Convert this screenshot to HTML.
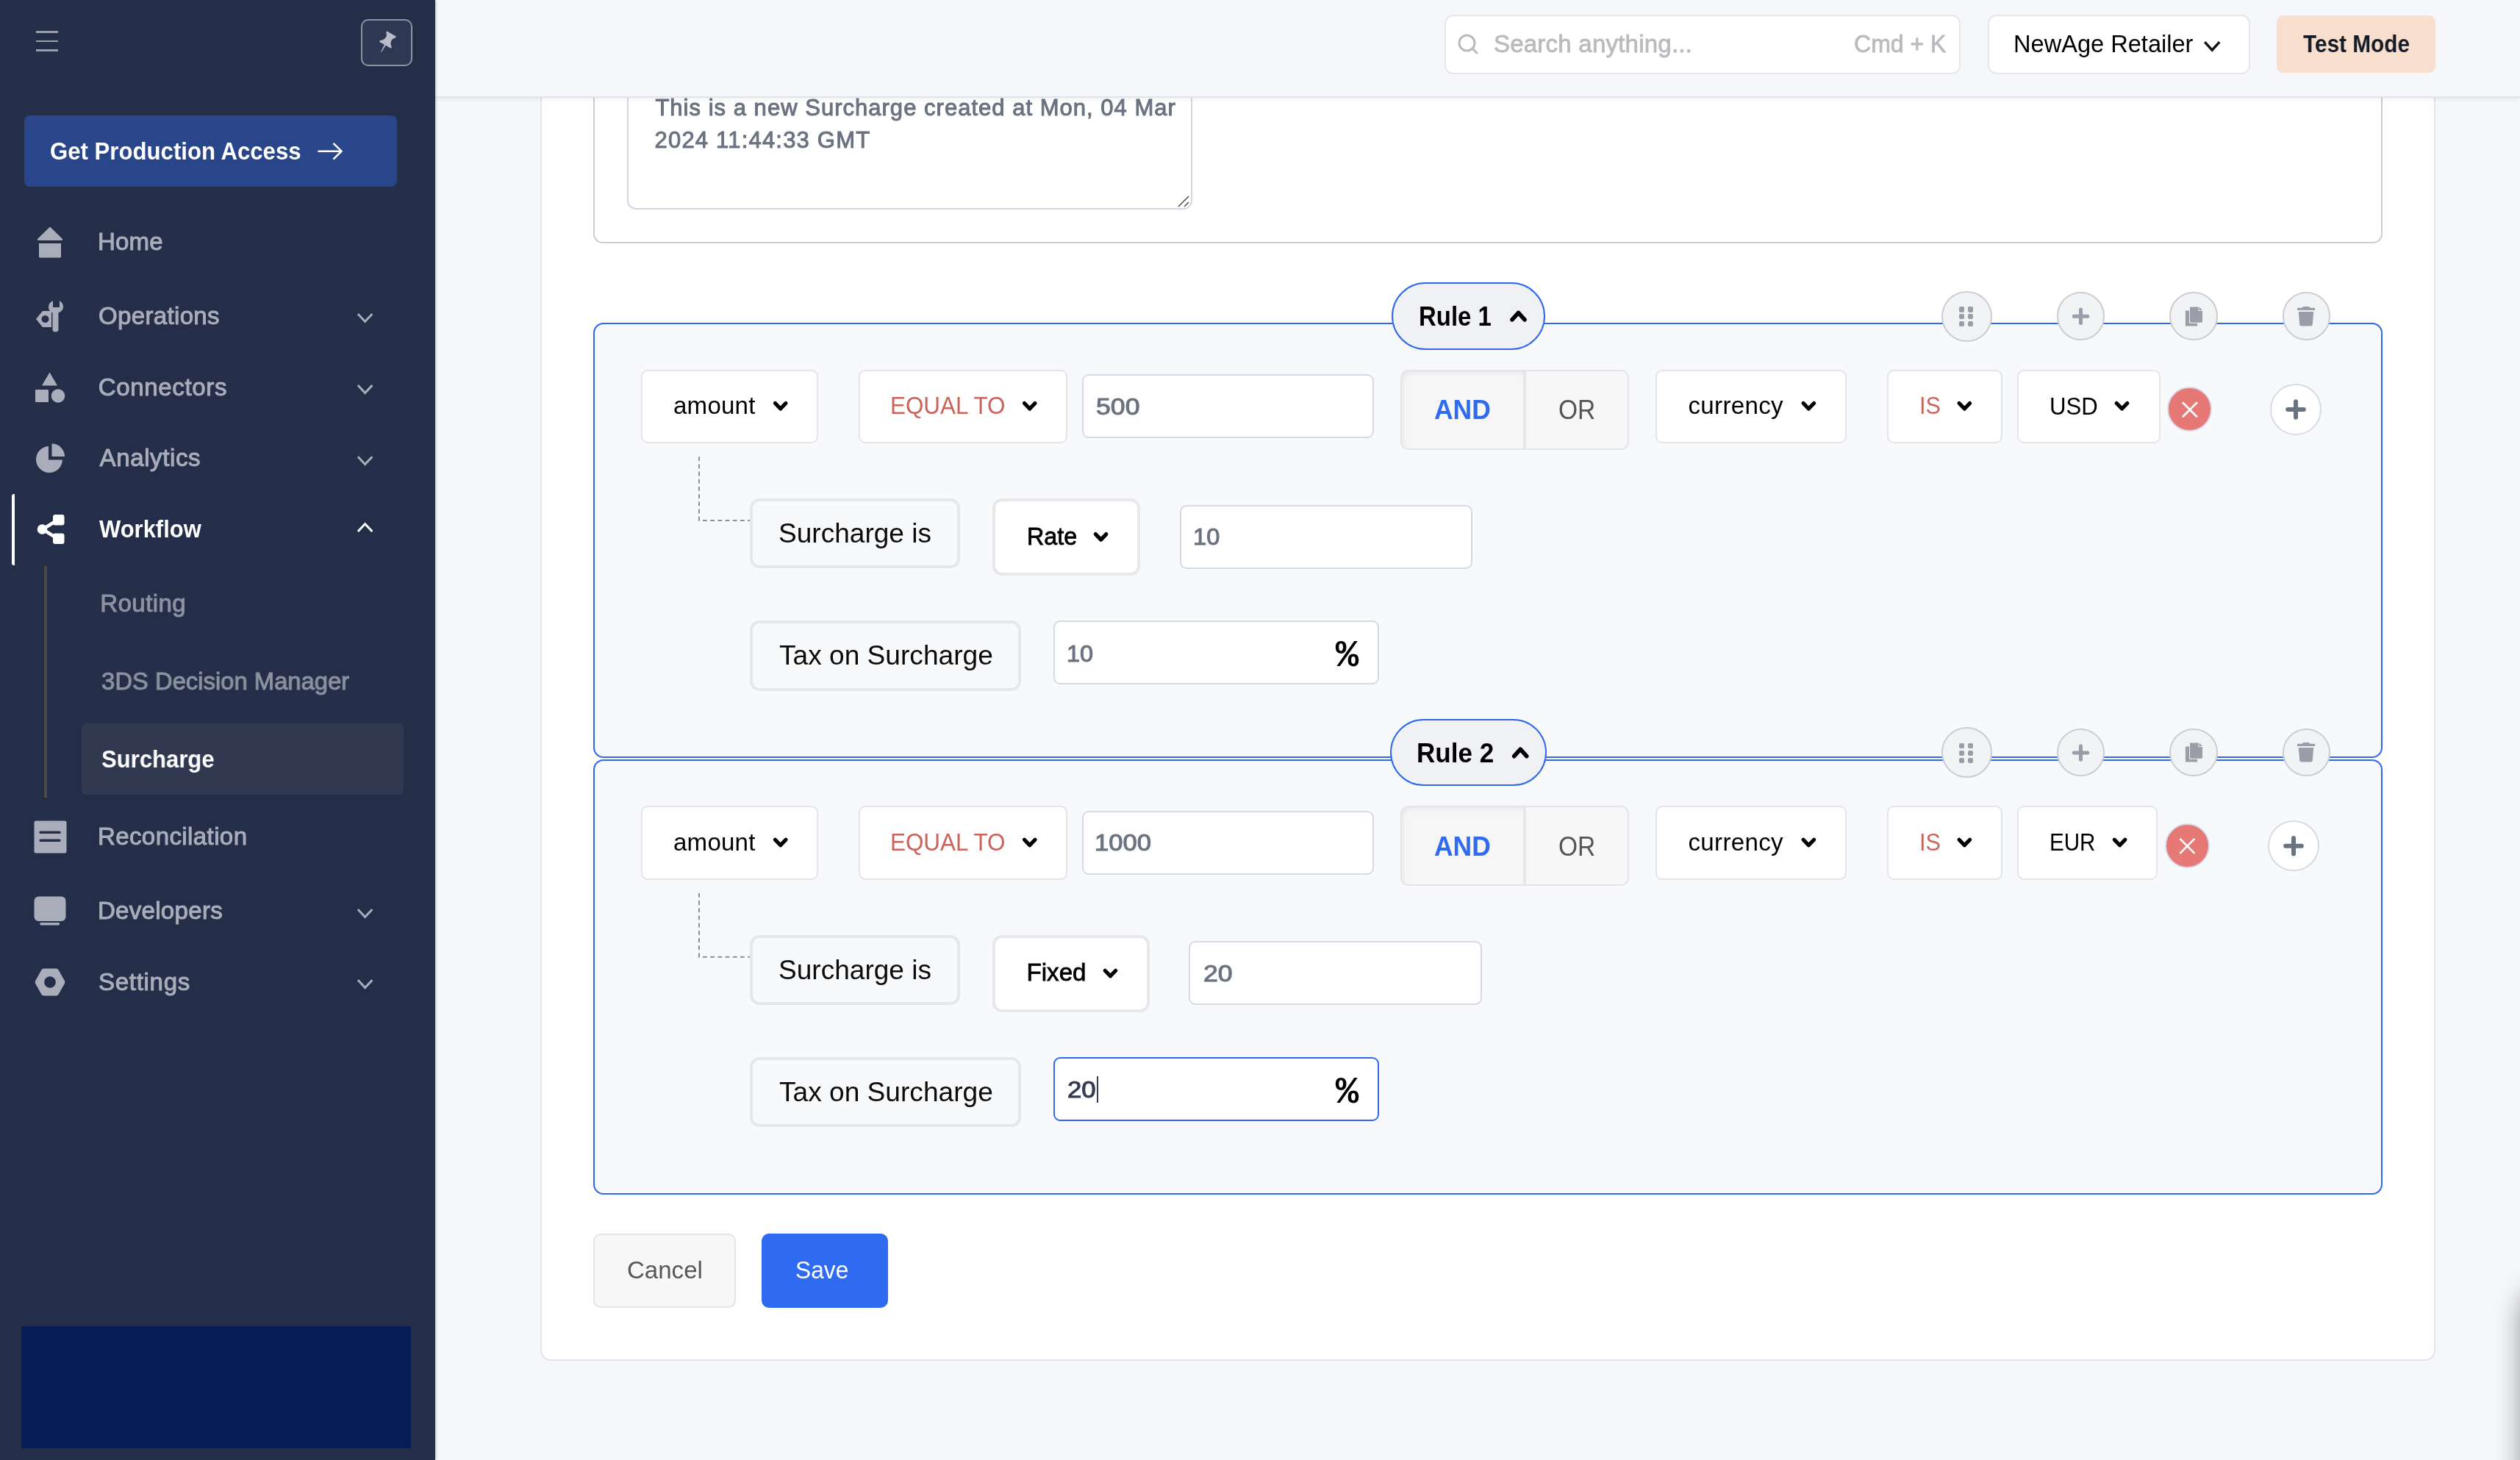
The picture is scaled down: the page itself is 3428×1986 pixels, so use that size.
<!DOCTYPE html>
<html lang="en"><head><meta charset="utf-8"><title>Surcharge</title>
<style>
html,body{margin:0;padding:0}
body{width:3428px;height:1986px;position:relative;overflow:hidden;background:#f6f7fb;font-family:"Liberation Sans",sans-serif}
#root{position:absolute;left:0;top:0;width:3428px;height:1986px;overflow:hidden;will-change:transform}
.t{position:absolute;white-space:nowrap;display:block;line-height:40px;transform-origin:0 0}
.b{position:absolute;box-sizing:border-box}
svg{position:absolute;overflow:visible;left:0;top:0}
</style></head><body><div id="root">
<div class="b" style="left:735.0px;top:60.0px;width:2577.7px;height:1790.5px;background:#fff;border:2px solid #e3e4ea;border-radius:14px"></div><div class="b" style="left:807.0px;top:40.0px;width:2434.0px;height:290.7px;background:#fff;border:2px solid #cbcdd4;border-radius:13px"></div><div class="b" style="left:853.0px;top:60.0px;width:768.5px;height:225.0px;background:#fff;border:2px solid #d4d6e2;border-radius:12px"></div><span class="t" style="left:891.4px;top:127.1px;font-size:31.0px;color:#6b7280;letter-spacing:1.02px;-webkit-text-stroke:1.00px #6b7280;">This is a new Surcharge created at Mon, 04 Mar</span><span class="t" style="left:890.5px;top:171.2px;font-size:31.0px;color:#6b7280;letter-spacing:1.20px;-webkit-text-stroke:1.00px #6b7280;">2024 11:44:33 GMT</span><svg width="1" height="1"><path d="M1603 281 L1617 267 M1611 281 L1617 275" stroke="#555" stroke-width="1.6" fill="none"/></svg><div class="b" style="left:807.0px;top:438.8px;width:2434.0px;height:592.2px;background:#f8f9fb;border:2.2px solid #2f68ee;border-radius:14px"></div><div class="b" style="left:1893.3px;top:384.0px;width:208.4px;height:91.6px;background:#f0f1f4;border:2.2px solid #2f68ee;border-radius:46px"></div><span class="t" style="left:1929.5px;top:410.3px;font-size:37.3px;font-weight:700;color:#000;transform:scaleX(0.8826);">Rule 1</span><svg width="1" height="1"><path d="M2057.0 434.9 L2065.5 425.4 L2074.0 434.9" stroke="#000" stroke-width="5.6" fill="none" stroke-linecap="round" stroke-linejoin="round"/></svg><div class="b" style="left:2640.7px;top:395.5px;width:69.0px;height:69.0px;background:#f2f3f5;border:2px solid #cbcdd2;border-radius:50%"></div><div class="b" style="left:2664.8px;top:417.0px;width:7.4px;height:7.6px;background:#9a9ea8;border-radius:2px"></div><div class="b" style="left:2677.0px;top:417.0px;width:7.4px;height:7.6px;background:#9a9ea8;border-radius:2px"></div><div class="b" style="left:2664.8px;top:426.9px;width:7.4px;height:7.6px;background:#9a9ea8;border-radius:2px"></div><div class="b" style="left:2677.0px;top:426.9px;width:7.4px;height:7.6px;background:#9a9ea8;border-radius:2px"></div><div class="b" style="left:2664.8px;top:436.8px;width:7.4px;height:7.6px;background:#9a9ea8;border-radius:2px"></div><div class="b" style="left:2677.0px;top:436.8px;width:7.4px;height:7.6px;background:#9a9ea8;border-radius:2px"></div><div class="b" style="left:2797.9px;top:397.1px;width:65.5px;height:65.5px;background:#f2f3f5;border:2px solid #cbcdd2;border-radius:50%"></div><svg width="1" height="1"><path d="M2821.2 430.3 H2839.8 M2830.5 421.1 V439.6" stroke="#9a9ea8" stroke-width="5" stroke-linecap="round" fill="none"/></svg><div class="b" style="left:2951.2px;top:397.1px;width:65.5px;height:65.5px;background:#f2f3f5;border:2px solid #cbcdd2;border-radius:50%"></div><svg style="left:2972px;top:416.5px" width="25" height="27" viewBox="0 0 25 27"><path d="M7 0.5 H18.5 V6 H24 V20.3 Q24 21.8 22.5 21.8 H8.5 Q7 21.8 7 20.3 Z M19.5 0.5 L24 5 H19.5 Z M0.9 5.6 H6 V21.3 Q6 22.8 7.5 22.8 H17 V26.4 H0.9 Z" fill="#9a9ea8"/></svg><div class="b" style="left:3104.6px;top:397.1px;width:65.5px;height:65.5px;background:#f2f3f5;border:2px solid #cbcdd2;border-radius:50%"></div><svg style="left:3125px;top:416.5px" width="24" height="27" viewBox="0 0 24 27"><path d="M8 0 H16 L17.5 1.8 H24 V5 H0 V1.8 H6.5 Z M1.8 7 H22.2 L20.8 24.5 Q20.6 26.5 18.6 26.5 H5.4 Q3.4 26.5 3.2 24.5 Z" fill="#9a9ea8"/></svg><div class="b" style="left:871.6px;top:502.6px;width:241.8px;height:100.4px;background:#fff;border:2px solid #e3e4ec;border-radius:9px"></div><span class="t" style="left:916.0px;top:532.3px;font-size:33.1px;color:#000;letter-spacing:0.22px;">amount</span><svg width="1" height="1"><path d="M1054.5 548.5 L1061.7 556.0 L1069.0 548.5" stroke="#000" stroke-width="5.2" fill="none" stroke-linecap="round" stroke-linejoin="round"/></svg><div class="b" style="left:1167.5px;top:502.6px;width:284.5px;height:100.4px;background:#fff;border:2px solid #e3e4ec;border-radius:9px"></div><span class="t" style="left:1211.0px;top:532.3px;font-size:33.1px;color:#c9655c;transform:scaleX(0.9490);">EQUAL TO</span><svg width="1" height="1"><path d="M1393.5 548.5 L1400.7 556.0 L1408.0 548.5" stroke="#000" stroke-width="5.2" fill="none" stroke-linecap="round" stroke-linejoin="round"/></svg><div class="b" style="left:1471.7px;top:509.3px;width:397.8px;height:87.2px;background:#fff;border:2px solid #d7d9e6;border-radius:9px"></div><span class="t" style="left:1490.9px;top:533.6px;font-size:31.0px;color:#6b7280;transform:scaleX(1.1493);-webkit-text-stroke:1.00px #6b7280;">500</span><div class="b" style="left:1905.4px;top:502.6px;width:310.2px;height:109.1px;background:#f7f7f8;border:2px solid #e3e4e9;border-radius:11px"></div><div class="b" style="left:1907.4px;top:504.6px;width:164.6px;height:105.1px;background:#f6f6f7;box-shadow:inset 3px 4px 7px -2px rgba(0,0,0,0.07);border-radius:9px 0 0 9px"></div><div class="b" style="left:2072.0px;top:504.6px;width:4.0px;height:105.1px;background:#e6e7eb"></div><span class="t" style="left:1951.1px;top:537.1px;font-size:37.3px;font-weight:700;color:#2f6bee;transform:scaleX(0.9511);">AND</span><span class="t" style="left:2119.8px;top:537.1px;font-size:37.3px;color:#555659;transform:scaleX(0.8994);">OR</span><div class="b" style="left:2251.8px;top:502.6px;width:260.6px;height:100.4px;background:#fff;border:2px solid #e3e4ec;border-radius:9px"></div><span class="t" style="left:2296.5px;top:532.3px;font-size:33.1px;color:#000;letter-spacing:0.33px;">currency</span><svg width="1" height="1"><path d="M2453.1 548.5 L2460.3 556.0 L2467.6 548.5" stroke="#000" stroke-width="5.2" fill="none" stroke-linecap="round" stroke-linejoin="round"/></svg><div class="b" style="left:2566.7px;top:502.6px;width:157.3px;height:100.4px;background:#fff;border:2px solid #e3e4ec;border-radius:9px"></div><span class="t" style="left:2610.7px;top:532.3px;font-size:33.1px;color:#c9655c;transform:scaleX(0.9250);">IS</span><svg width="1" height="1"><path d="M2665.1 548.5 L2672.3 556.0 L2679.6 548.5" stroke="#000" stroke-width="5.2" fill="none" stroke-linecap="round" stroke-linejoin="round"/></svg><div class="b" style="left:2743.5px;top:502.6px;width:195.1px;height:100.4px;background:#fff;border:2px solid #e3e4ec;border-radius:9px"></div><span class="t" style="left:2787.7px;top:532.6px;font-size:33.1px;color:#000;transform:scaleX(0.9413);">USD</span><svg width="1" height="1"><path d="M2879.2 548.5 L2886.5 556.0 L2893.8 548.5" stroke="#000" stroke-width="5.2" fill="none" stroke-linecap="round" stroke-linejoin="round"/></svg><div class="b" style="left:2948.2px;top:526.4px;width:61.0px;height:61.0px;background:#e67875;border:2px solid #d9dcea;border-radius:50%"></div><svg width="1" height="1"><path d="M2968.9 547.2 l20 20 m0 -20 l-20 20" stroke="#fff" stroke-width="2.7" fill="none"/></svg><div class="b" style="left:3088.2px;top:522.1px;width:69.5px;height:69.5px;background:#fff;border:2px solid #d7dae7;border-radius:50%"></div><svg width="1" height="1"><path d="M3112.2 557.0 H3133.8 M3123.0 546.2 V567.8" stroke="#6b7280" stroke-width="6" stroke-linecap="round" fill="none"/></svg><svg width="1" height="1"><path d="M951 621.2 V708.0 H1020.5" stroke="#8b8f9a" stroke-width="2" stroke-dasharray="5.8 4.4" fill="none"/></svg><div class="b" style="left:1020.3px;top:678.3px;width:285.4px;height:95.2px;background:#f8f9fb;border:4px solid #e6e7ea;border-radius:13px"></div><span class="t" style="left:1059.0px;top:705.4px;font-size:37.3px;color:#0b0b0c;transform:scaleX(0.9934);">Surcharge is</span><div class="b" style="left:1350.1px;top:678.3px;width:201.3px;height:104.5px;background:#fff;border:4px solid #e7e8eb;border-radius:13px"></div><span class="t" style="left:1396.5px;top:709.7px;font-size:33.1px;color:#000;transform:scaleX(0.9759);-webkit-text-stroke:0.80px #000;">Rate</span><svg width="1" height="1"><path d="M1490.3 726.6 L1497.6 734.1 L1504.8 726.6" stroke="#000" stroke-width="5.2" fill="none" stroke-linecap="round" stroke-linejoin="round"/></svg><div class="b" style="left:1605.2px;top:686.5px;width:398.3px;height:87.2px;background:#fff;border:2px solid #d7d9e6;border-radius:9px"></div><span class="t" style="left:1622.8px;top:711.0px;font-size:31.0px;color:#6b7280;transform:scaleX(1.0531);-webkit-text-stroke:1.00px #6b7280;">10</span><div class="b" style="left:1020.3px;top:844.0px;width:368.3px;height:95.6px;background:#f8f9fb;border:4px solid #e6e7ea;border-radius:13px"></div><span class="t" style="left:1060.0px;top:871.4px;font-size:37.3px;color:#0b0b0c;transform:scaleX(0.9948);">Tax on Surcharge</span><div class="b" style="left:1433.2px;top:844.0px;width:442.5px;height:87.3px;background:#fff;border:2px solid #d7d9e6;border-radius:9px"></div><span class="t" style="left:1451.1px;top:869.6px;font-size:31.0px;color:#6b7280;transform:scaleX(1.0469);-webkit-text-stroke:1.00px #6b7280;">10</span><span class="t" style="left:1816.8px;top:862.0px;font-family:'Liberation Mono',monospace;font-size:52.5px;line-height:60px;font-weight:700;color:#000">%</span><div class="b" style="left:807.0px;top:1032.5px;width:2434.0px;height:592.2px;background:#f8f9fb;border:2.2px solid #2f68ee;border-radius:14px"></div><div class="b" style="left:1890.5px;top:977.7px;width:213.9px;height:91.6px;background:#f0f1f4;border:2.2px solid #2f68ee;border-radius:46px"></div><span class="t" style="left:1926.7px;top:1004.0px;font-size:37.3px;font-weight:700;color:#000;transform:scaleX(0.9409);">Rule 2</span><svg width="1" height="1"><path d="M2059.7 1028.7 L2068.2 1019.2 L2076.7 1028.7" stroke="#000" stroke-width="5.6" fill="none" stroke-linecap="round" stroke-linejoin="round"/></svg><div class="b" style="left:2640.7px;top:989.2px;width:69.0px;height:69.0px;background:#f2f3f5;border:2px solid #cbcdd2;border-radius:50%"></div><div class="b" style="left:2664.8px;top:1010.7px;width:7.4px;height:7.6px;background:#9a9ea8;border-radius:2px"></div><div class="b" style="left:2677.0px;top:1010.7px;width:7.4px;height:7.6px;background:#9a9ea8;border-radius:2px"></div><div class="b" style="left:2664.8px;top:1020.6px;width:7.4px;height:7.6px;background:#9a9ea8;border-radius:2px"></div><div class="b" style="left:2677.0px;top:1020.6px;width:7.4px;height:7.6px;background:#9a9ea8;border-radius:2px"></div><div class="b" style="left:2664.8px;top:1030.5px;width:7.4px;height:7.6px;background:#9a9ea8;border-radius:2px"></div><div class="b" style="left:2677.0px;top:1030.5px;width:7.4px;height:7.6px;background:#9a9ea8;border-radius:2px"></div><div class="b" style="left:2797.9px;top:990.9px;width:65.5px;height:65.5px;background:#f2f3f5;border:2px solid #cbcdd2;border-radius:50%"></div><svg width="1" height="1"><path d="M2821.2 1024.0 H2839.8 M2830.5 1014.8 V1033.2" stroke="#9a9ea8" stroke-width="5" stroke-linecap="round" fill="none"/></svg><div class="b" style="left:2951.2px;top:990.9px;width:65.5px;height:65.5px;background:#f2f3f5;border:2px solid #cbcdd2;border-radius:50%"></div><svg style="left:2972px;top:1010.2px" width="25" height="27" viewBox="0 0 25 27"><path d="M7 0.5 H18.5 V6 H24 V20.3 Q24 21.8 22.5 21.8 H8.5 Q7 21.8 7 20.3 Z M19.5 0.5 L24 5 H19.5 Z M0.9 5.6 H6 V21.3 Q6 22.8 7.5 22.8 H17 V26.4 H0.9 Z" fill="#9a9ea8"/></svg><div class="b" style="left:3104.6px;top:990.9px;width:65.5px;height:65.5px;background:#f2f3f5;border:2px solid #cbcdd2;border-radius:50%"></div><svg style="left:3125px;top:1010.2px" width="24" height="27" viewBox="0 0 24 27"><path d="M8 0 H16 L17.5 1.8 H24 V5 H0 V1.8 H6.5 Z M1.8 7 H22.2 L20.8 24.5 Q20.6 26.5 18.6 26.5 H5.4 Q3.4 26.5 3.2 24.5 Z" fill="#9a9ea8"/></svg><div class="b" style="left:871.6px;top:1096.3px;width:241.8px;height:100.4px;background:#fff;border:2px solid #e3e4ec;border-radius:9px"></div><span class="t" style="left:916.0px;top:1126.0px;font-size:33.1px;color:#000;letter-spacing:0.22px;">amount</span><svg width="1" height="1"><path d="M1054.5 1142.2 L1061.7 1149.8 L1069.0 1142.2" stroke="#000" stroke-width="5.2" fill="none" stroke-linecap="round" stroke-linejoin="round"/></svg><div class="b" style="left:1167.5px;top:1096.3px;width:284.5px;height:100.4px;background:#fff;border:2px solid #e3e4ec;border-radius:9px"></div><span class="t" style="left:1211.0px;top:1126.0px;font-size:33.1px;color:#c9655c;transform:scaleX(0.9490);">EQUAL TO</span><svg width="1" height="1"><path d="M1393.5 1142.2 L1400.7 1149.8 L1408.0 1142.2" stroke="#000" stroke-width="5.2" fill="none" stroke-linecap="round" stroke-linejoin="round"/></svg><div class="b" style="left:1471.7px;top:1103.0px;width:397.8px;height:87.2px;background:#fff;border:2px solid #d7d9e6;border-radius:9px"></div><span class="t" style="left:1489.0px;top:1127.3px;font-size:31.0px;color:#6b7280;transform:scaleX(1.1162);-webkit-text-stroke:1.00px #6b7280;">1000</span><div class="b" style="left:1905.4px;top:1096.3px;width:310.2px;height:109.1px;background:#f7f7f8;border:2px solid #e3e4e9;border-radius:11px"></div><div class="b" style="left:1907.4px;top:1098.3px;width:164.6px;height:105.1px;background:#f6f6f7;box-shadow:inset 3px 4px 7px -2px rgba(0,0,0,0.07);border-radius:9px 0 0 9px"></div><div class="b" style="left:2072.0px;top:1098.3px;width:4.0px;height:105.1px;background:#e6e7eb"></div><span class="t" style="left:1951.1px;top:1130.8px;font-size:37.3px;font-weight:700;color:#2f6bee;transform:scaleX(0.9511);">AND</span><span class="t" style="left:2119.8px;top:1130.8px;font-size:37.3px;color:#555659;transform:scaleX(0.8994);">OR</span><div class="b" style="left:2251.8px;top:1096.3px;width:260.6px;height:100.4px;background:#fff;border:2px solid #e3e4ec;border-radius:9px"></div><span class="t" style="left:2296.5px;top:1126.0px;font-size:33.1px;color:#000;letter-spacing:0.33px;">currency</span><svg width="1" height="1"><path d="M2453.1 1142.2 L2460.3 1149.8 L2467.6 1142.2" stroke="#000" stroke-width="5.2" fill="none" stroke-linecap="round" stroke-linejoin="round"/></svg><div class="b" style="left:2566.7px;top:1096.3px;width:157.3px;height:100.4px;background:#fff;border:2px solid #e3e4ec;border-radius:9px"></div><span class="t" style="left:2610.7px;top:1126.0px;font-size:33.1px;color:#c9655c;transform:scaleX(0.9250);">IS</span><svg width="1" height="1"><path d="M2665.1 1142.2 L2672.3 1149.8 L2679.6 1142.2" stroke="#000" stroke-width="5.2" fill="none" stroke-linecap="round" stroke-linejoin="round"/></svg><div class="b" style="left:2743.5px;top:1096.3px;width:191.7px;height:100.4px;background:#fff;border:2px solid #e3e4ec;border-radius:9px"></div><span class="t" style="left:2787.8px;top:1126.3px;font-size:33.1px;color:#000;transform:scaleX(0.8949);">EUR</span><svg width="1" height="1"><path d="M2876.3 1142.2 L2883.6 1149.8 L2890.8 1142.2" stroke="#000" stroke-width="5.2" fill="none" stroke-linecap="round" stroke-linejoin="round"/></svg><div class="b" style="left:2944.7px;top:1120.1px;width:61.0px;height:61.0px;background:#e67875;border:2px solid #d9dcea;border-radius:50%"></div><svg width="1" height="1"><path d="M2965.4 1140.9 l20 20 m0 -20 l-20 20" stroke="#fff" stroke-width="2.7" fill="none"/></svg><div class="b" style="left:3085.2px;top:1115.8px;width:69.5px;height:69.5px;background:#fff;border:2px solid #d7dae7;border-radius:50%"></div><svg width="1" height="1"><path d="M3109.2 1150.7 H3130.8 M3120.0 1140.0 V1161.5" stroke="#6b7280" stroke-width="6" stroke-linecap="round" fill="none"/></svg><svg width="1" height="1"><path d="M951 1214.9 V1301.7 H1020.5" stroke="#8b8f9a" stroke-width="2" stroke-dasharray="5.8 4.4" fill="none"/></svg><div class="b" style="left:1020.3px;top:1272.0px;width:285.4px;height:95.2px;background:#f8f9fb;border:4px solid #e6e7ea;border-radius:13px"></div><span class="t" style="left:1059.0px;top:1299.1px;font-size:37.3px;color:#0b0b0c;transform:scaleX(0.9934);">Surcharge is</span><div class="b" style="left:1350.1px;top:1272.0px;width:213.6px;height:104.5px;background:#fff;border:4px solid #e7e8eb;border-radius:13px"></div><span class="t" style="left:1396.5px;top:1303.4px;font-size:33.1px;color:#000;letter-spacing:0.02px;-webkit-text-stroke:0.80px #000;">Fixed</span><svg width="1" height="1"><path d="M1503.2 1320.3 L1510.4 1327.8 L1517.7 1320.3" stroke="#000" stroke-width="5.2" fill="none" stroke-linecap="round" stroke-linejoin="round"/></svg><div class="b" style="left:1617.1px;top:1280.2px;width:398.6px;height:87.2px;background:#fff;border:2px solid #d7d9e6;border-radius:9px"></div><span class="t" style="left:1636.8px;top:1304.7px;font-size:31.0px;color:#6b7280;transform:scaleX(1.1503);-webkit-text-stroke:1.00px #6b7280;">20</span><div class="b" style="left:1020.3px;top:1437.7px;width:368.3px;height:95.6px;background:#f8f9fb;border:4px solid #e6e7ea;border-radius:13px"></div><span class="t" style="left:1060.0px;top:1465.1px;font-size:37.3px;color:#0b0b0c;transform:scaleX(0.9948);">Tax on Surcharge</span><div class="b" style="left:1433.2px;top:1437.7px;width:442.5px;height:87.3px;background:#fff;border:2px solid #2f68ee;border-radius:9px"></div><span class="t" style="left:1452.4px;top:1463.3px;font-size:31.0px;color:#353c50;transform:scaleX(1.1228);-webkit-text-stroke:1.00px #353c50;">20</span><span class="t" style="left:1816.8px;top:1455.7px;font-family:'Liberation Mono',monospace;font-size:52.5px;line-height:60px;font-weight:700;color:#000">%</span><div class="b" style="left:1492.2px;top:1464.3px;width:1.8px;height:36.2px;background:#353c50"></div><div class="b" style="left:807.2px;top:1678.0px;width:193.6px;height:100.7px;background:#f7f7f7;border:2px solid #e4e5ea;border-radius:10px"></div><span class="t" style="left:852.9px;top:1707.9px;font-size:33.1px;color:#55575b;letter-spacing:0.01px;">Cancel</span><div class="b" style="left:1036.2px;top:1678.0px;width:171.6px;height:100.7px;background:#2f6bf0;border-radius:10px"></div><span class="t" style="left:1081.9px;top:1707.9px;font-size:33.1px;color:#fff;transform:scaleX(0.9588);">Save</span><div class="b" style="left:3440.0px;top:1760.0px;width:100.0px;height:440.0px;background:#000;box-shadow:0 0 36px 10px rgba(0,0,0,0.42);border-radius:30px"></div><div class="b" style="left:592.0px;top:0.0px;width:2836.0px;height:132.5px;background:#f6f7fb;border-bottom:2px solid #e2e4ea;box-shadow:0 3px 5px rgba(0,0,0,0.05)"></div><div class="b" style="left:1964.7px;top:19.6px;width:702.7px;height:81.4px;background:#fff;border:2px solid #e6e7ea;border-radius:12px"></div><svg style="left:1983px;top:46px" width="30" height="30" viewBox="0 0 30 30"><circle cx="12.5" cy="12.5" r="10.5" stroke="#b9bbbe" stroke-width="3" fill="none"/><path d="M20 20 L26 26" stroke="#b9bbbe" stroke-width="3" stroke-linecap="round"/></svg><span class="t" style="left:2031.9px;top:40.0px;font-size:33.1px;color:#b9bbbe;letter-spacing:0.20px;-webkit-text-stroke:0.80px #b9bbbe;">Search anything...</span><span class="t" style="left:2521.5px;top:40.0px;font-size:33.1px;color:#b9bbbe;transform:scaleX(0.9681);-webkit-text-stroke:0.80px #b9bbbe;">Cmd + K</span><div class="b" style="left:2703.7px;top:19.6px;width:357.1px;height:81.4px;background:#fff;border:2px solid #e6e7ea;border-radius:12px"></div><span class="t" style="left:2738.8px;top:39.7px;font-size:33.1px;color:#000;transform:scaleX(0.9849);">NewAge Retailer</span><svg width="1" height="1"><path d="M2999.2 57.1 L3009.2 68.1 L3019.2 57.1" stroke="#111" stroke-width="3.4" fill="none" stroke-linecap="butt" stroke-linejoin="miter"/></svg><div class="b" style="left:3097.0px;top:21.0px;width:215.8px;height:77.5px;background:#f8dfcd;border-radius:9px"></div><span class="t" style="left:3133.2px;top:39.7px;font-size:33.1px;font-weight:700;color:#151a27;transform:scaleX(0.8998);">Test Mode</span><div class="b" style="left:0.0px;top:0.0px;width:592.0px;height:1986.0px;background:#252e48;box-shadow:1px 0 3px rgba(0,0,0,0.22)"></div><div class="b" style="left:48.8px;top:42.3px;width:30.2px;height:2.7px;background:#9a9ea9"></div><div class="b" style="left:48.8px;top:54.6px;width:30.2px;height:2.7px;background:#9a9ea9"></div><div class="b" style="left:48.8px;top:67.3px;width:30.2px;height:2.7px;background:#9a9ea9"></div><div class="b" style="left:491.0px;top:26.2px;width:69.5px;height:64.3px;background:#2e3853;border:2px solid #8e93a1;border-radius:10px"></div><svg width="1" height="1"><g transform="translate(532.6 46.1) rotate(30)" fill="#babdc8"><path d="M-7.5 0 H7.5 L7 2.5 Q3.8 5 4.5 9 Q5.2 12.8 9.2 15.5 V17.5 H-9.2 V15.5 Q-5.2 12.8 -4.5 9 Q-3.8 5 -7 2.5 Z"/><path d="M-1 17 H1 L0.4 28.5 H-0.4 Z"/></g></svg><div class="b" style="left:33.0px;top:157.0px;width:507.0px;height:96.8px;background:#2a468a;border-radius:8px"></div><span class="t" style="left:68.1px;top:186.4px;font-size:33.1px;font-weight:700;color:#fff;transform:scaleX(0.9417);">Get Production Access</span><svg width="1" height="1"><path d="M432.5 205.7 H464 M453.5 194.8 L464.5 205.7 L453.5 216.6" stroke="#fff" stroke-width="2.6" fill="none" stroke-linejoin="miter"/></svg><span class="t" style="left:132.9px;top:308.8px;font-size:33.1px;color:#a9adba;letter-spacing:0.21px;-webkit-text-stroke:1.00px #a9adba;">Home</span><span class="t" style="left:134.0px;top:409.5px;font-size:33.1px;color:#a9adba;letter-spacing:0.31px;-webkit-text-stroke:1.00px #a9adba;">Operations</span><svg width="1" height="1"><path d="M486.9 427.0 L496.6 437.4 L506.4 427.0" stroke="#a9adba" stroke-width="3" fill="none" stroke-linecap="butt" stroke-linejoin="miter"/></svg><span class="t" style="left:133.8px;top:506.5px;font-size:33.1px;color:#a9adba;letter-spacing:0.61px;-webkit-text-stroke:1.00px #a9adba;">Connectors</span><svg width="1" height="1"><path d="M486.9 524.1 L496.6 534.5 L506.4 524.1" stroke="#a9adba" stroke-width="3" fill="none" stroke-linecap="butt" stroke-linejoin="miter"/></svg><span class="t" style="left:135.5px;top:603.2px;font-size:33.1px;color:#a9adba;letter-spacing:0.59px;-webkit-text-stroke:1.00px #a9adba;">Analytics</span><svg width="1" height="1"><path d="M486.9 621.2 L496.6 631.6 L506.4 621.2" stroke="#a9adba" stroke-width="3" fill="none" stroke-linecap="butt" stroke-linejoin="miter"/></svg><div class="b" style="left:16.0px;top:672.0px;width:4.0px;height:97.0px;background:#fff;border-radius:3px 0 0 3px"></div><span class="t" style="left:135.0px;top:699.5px;font-size:33.1px;font-weight:700;color:#fff;transform:scaleX(0.9363);">Workflow</span><svg width="1" height="1"><path d="M486.9 723.0 L496.6 712.6 L506.4 723.0" stroke="#fff" stroke-width="3" fill="none" stroke-linecap="butt" stroke-linejoin="miter"/></svg><div class="b" style="left:60.0px;top:769.5px;width:3.8px;height:315.3px;background:#4b4a47"></div><span class="t" style="left:136.3px;top:800.7px;font-size:33.1px;color:#8c92a0;letter-spacing:0.39px;-webkit-text-stroke:1.00px #8c92a0;">Routing</span><span class="t" style="left:137.6px;top:906.7px;font-size:33.1px;color:#8c92a0;transform:scaleX(0.9913);-webkit-text-stroke:1.00px #8c92a0;">3DS Decision Manager</span><div class="b" style="left:111.0px;top:983.8px;width:438.0px;height:97.2px;background:#30394f;border-radius:5px"></div><span class="t" style="left:137.5px;top:1012.9px;font-size:33.1px;font-weight:700;color:#fff;transform:scaleX(0.9385);">Surcharge</span><span class="t" style="left:132.9px;top:1118.1px;font-size:33.1px;color:#a9adba;letter-spacing:0.38px;-webkit-text-stroke:1.00px #a9adba;">Reconcilation</span><span class="t" style="left:132.9px;top:1218.5px;font-size:33.1px;color:#a9adba;letter-spacing:0.28px;-webkit-text-stroke:1.00px #a9adba;">Developers</span><svg width="1" height="1"><path d="M486.9 1237.0 L496.6 1247.4 L506.4 1237.0" stroke="#a9adba" stroke-width="3" fill="none" stroke-linecap="butt" stroke-linejoin="miter"/></svg><span class="t" style="left:134.0px;top:1315.8px;font-size:33.1px;color:#a9adba;letter-spacing:0.68px;-webkit-text-stroke:1.00px #a9adba;">Settings</span><svg width="1" height="1"><path d="M486.9 1333.1 L496.6 1343.5 L506.4 1333.1" stroke="#a9adba" stroke-width="3" fill="none" stroke-linecap="butt" stroke-linejoin="miter"/></svg><svg style="left:50px;top:308px" width="36" height="43" viewBox="0 0 36 43"><path d="M18 0.5 L35 17 Q35.5 19 34 19 H2 Q0.5 19 1 17 Z M3 23 H33 V41 Q33 42.5 31.5 42.5 H4.5 Q3 42.5 3 41 Z" fill="#a9adba"/></svg><svg style="left:48px;top:408px" width="40" height="44" viewBox="0 0 40 44"><path d="M10 15 H22 V37 H10 L1 26 Z M13.5 21 a5 5 0 1 0 0.01 0 Z" fill="#a9adba" fill-rule="evenodd"/><path d="M24 1 Q18 4 18 10 Q18 15 23.5 17.5 V40 Q23.5 43.5 27.5 43.5 Q31.5 43.5 31.5 40 V17.5 Q38 15 38 9.5 Q38 4 33 1 V10 H24 Z" fill="#a9adba"/></svg><svg style="left:48px;top:506px" width="41" height="42" viewBox="0 0 41 42"><path d="M19.5 0.5 L30 18.5 H9 Z" fill="#a9adba"/><rect x="0" y="24" width="18" height="17" rx="1" fill="#a9adba"/><circle cx="31" cy="32.5" r="9.3" fill="#a9adba"/></svg><svg style="left:48.5px;top:603px" width="40" height="41" viewBox="0 0 40 41"><path d="M17 4 V22.5 H36 A18 18 0 1 1 17 4 Z" fill="#a9adba"/><path d="M21.5 0.5 A17.5 17.5 0 0 1 39 18 H21.5 Z" fill="#a9adba"/></svg><svg style="left:50px;top:699px" width="39" height="42" viewBox="0 0 39 42"><path d="M8 21 L28 8.5 M8 21 L28 33.5" stroke="#fff" stroke-width="4.5" fill="none"/><circle cx="7.5" cy="21" r="6.8" fill="#fff"/><rect x="22" y="1" width="15.5" height="14.5" rx="3" fill="#fff"/><rect x="22" y="26.5" width="15.5" height="14.5" rx="3" fill="#fff"/></svg><svg style="left:46px;top:1116px" width="45" height="45" viewBox="0 0 45 45"><path d="M3 0.5 H42 Q44.5 0.5 44.5 3 V42 Q44.5 44.5 42 44.5 H3 Q0.5 44.5 0.5 42 V3 Q0.5 0.5 3 0.5 Z M9 14.5 a1.7 1.7 0 0 0 0 3.4 H35 a1.7 1.7 0 0 0 0 -3.4 Z M9 25.5 a1.7 1.7 0 0 0 0 3.4 H35 a1.7 1.7 0 0 0 0 -3.4 Z" fill="#a9adba" fill-rule="evenodd"/></svg><svg style="left:46px;top:1219px" width="45" height="40" viewBox="0 0 45 40"><rect x="0.5" y="0.5" width="43" height="33.5" rx="6" fill="#a9adba"/><rect x="8.5" y="36" width="26.5" height="3.5" rx="1" fill="#a9adba"/></svg><svg style="left:47px;top:1317px" width="42" height="38" viewBox="0 0 42 38"><path d="M12.5 0.5 H29.5 Q31.5 0.5 32.5 2.2 L40.8 17 Q41.8 19 40.8 21 L32.5 35.8 Q31.5 37.5 29.5 37.5 H12.5 Q10.5 37.5 9.5 35.8 L1.2 21 Q0.2 19 1.2 17 L9.5 2.2 Q10.5 0.5 12.5 0.5 Z M21 11.2 a7.8 7.8 0 1 0 0.01 0 Z" fill="#a9adba" fill-rule="evenodd"/></svg><div class="b" style="left:29.0px;top:1804.0px;width:529.5px;height:166.0px;background:#081d58"></div></div></body></html>
